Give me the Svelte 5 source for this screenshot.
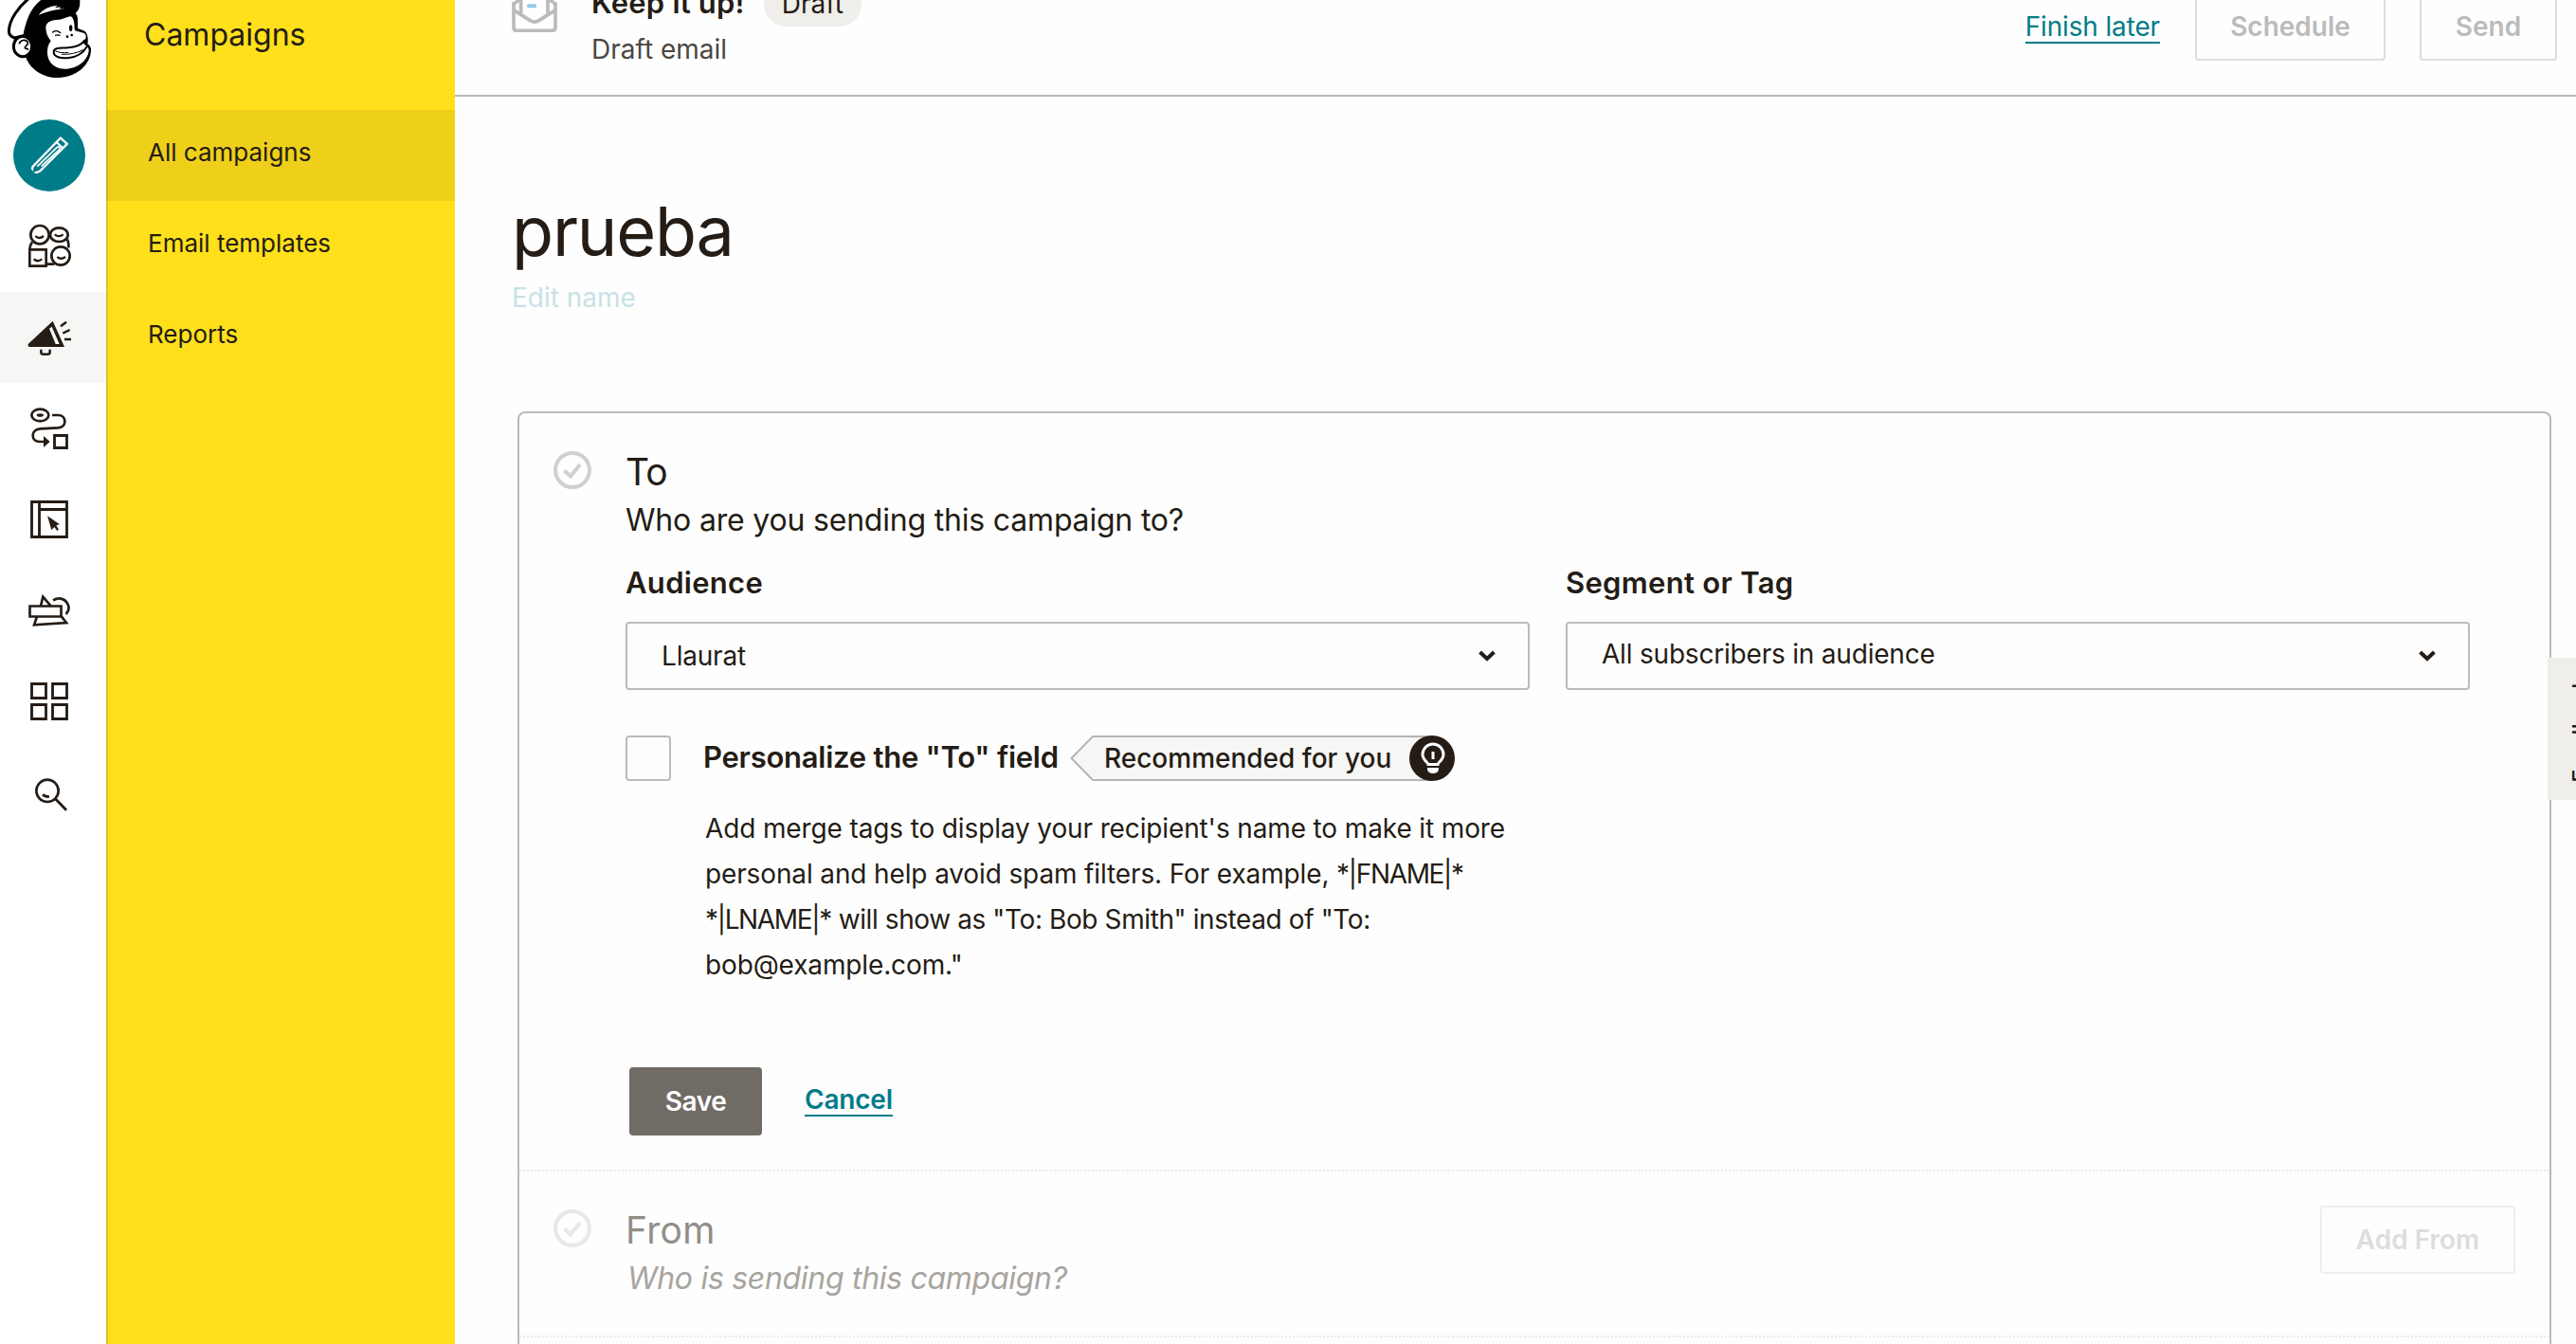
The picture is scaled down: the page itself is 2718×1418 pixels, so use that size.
<script lang="ts">
  type IconName =
    | "create"
    | "audience"
    | "campaigns"
    | "automations"
    | "website"
    | "studio"
    | "integrations"
    | "search";

  const rail: IconName[] = [
    "create",
    "audience",
    "campaigns",
    "automations",
    "website",
    "studio",
    "integrations",
    "search",
  ];

  const viewBoxes: Record<IconName, string> = {
    create: "84 420 144 144",
    audience: "84 708 144 144",
    campaigns: "84 996 144 144",
    automations: "84 24 144 144",
    website: "84 312 144 144",
    studio: "84 600 144 144",
    integrations: "84 888 144 144",
    search: "84 1176 144 144",
  };

  const links = ["All campaigns", "Email templates", "Reports"];

  let activeRail: IconName = $state("campaigns");
  let activeLink = $state("All campaigns");
  let personalize = $state(false);
</script>

{#snippet check()}
  <svg class="check" viewBox="0 0 40 40" fill="none" stroke="currentColor" stroke-width="4">
    <circle cx="20" cy="20" r="18" />
    <path d="M11.5 20.5l6.5 6L28 14" />
  </svg>
{/snippet}

{#snippet chevron()}
  <svg class="chevron" viewBox="0 0 18 12" fill="none" stroke="currentColor" stroke-width="4">
    <path d="M1.6 2L9 9l7.400-7" />
  </svg>
{/snippet}

<div class="page">
  <nav class="rail">
    <svg class="logo" viewBox="0 0 336 348">
      <path
        d="M95-8C60 20 29 62 28 98c0 12 8 18 18 22l32-8C86 62 115 20 160-8z"
        fill="#fff"
        stroke="#000"
        stroke-width="9"
      />
      <path
        d="M136-5C98 22 82 62 76 106l6 76c14 36 52 64 102 64 58 0 106-42 104-92-2-8-7-12-11-15 3-14 1-32-8-40-8-6-18-6-23-10V62c0-10-3-16-7-20 13-12 16-26 13-47z"
      />
      <path
        d="M145 88c0-16 14-24 33-25 22 0 32-10 46-11 9 4 12 20 12 41 2 9 26 6 34 15 5 11 0 19-8 24 3 11 21 15 19 29-4 30-35 57-76 57-39 0-57-28-55-58 1-14 5-22 11-30-10-12-16-26-16-42z"
        fill="#fff"
      />
      <g fill="none" stroke="#000" stroke-width="6" stroke-linecap="round">
        <path d="M268 128c-12 16-30 22-52 23-22 2-46-2-46 14 0 15 22 21 48 18 24-3 44-14 56-34" />
        <path d="M176 162c14 5 24 6 40 4M196 172c26 1 48-4 66-14" stroke-width="3" />
        <path d="M167 102c6-5 16-6 24 2M176 112c4-2 8-2 13 0" stroke-width="4" />
      </g>
      <ellipse cx="224" cy="89" rx="5" ry="10" />
      <circle cx="213" cy="116" r="4" />
      <circle cx="227" cy="111" r="4" />
      <ellipse cx="72" cy="147" rx="29" ry="32" fill="#fff" stroke="#000" stroke-width="9" />
      <path
        d="M61 139c2-13 22-16 27-4 3 8-10 10-9 16 2 5 10 1 10 7"
        fill="none"
        stroke="#000"
        stroke-width="5"
      />
      <path d="M122 48c14-20 34-28 60-31l-8 8 18-3-5 5 22-1c-32 5-60 8-87 22z" fill="#fff" />
    </svg>

    {#each rail as name}
      <button
        class="rail-item {name}"
        class:active={name === activeRail}
        aria-label={name}
        onclick={() => (activeRail = name)}
      >
        <svg viewBox={viewBoxes[name]} fill="none" stroke="currentColor" stroke-width="8.500">
          {#if name === "create"}
            <path d="M99.500 547.500l4-20 88-91 21 19-86 86-12 5z" stroke-width="7" />
            <path d="M178 449l20 19" stroke-width="6" />
            <path d="M118 527l62-60q5-4 8-1t-1 8l-56 52" stroke-width="5" />
          {:else if name === "audience"}
            <g stroke-width="8">
              <circle cx="126" cy="743" r="29" />
              <ellipse cx="187" cy="743" rx="28" ry="22" />
              <path d="M94 790h52v52H94z" />
              <circle cx="192" cy="810" r="29" />
              <path d="M102 766q-8 10-8 22M213 758q5 10 4 26M150 836h22" />
            </g>
            <path
              d="M112 747q12 12 26 0M173 742q13 11 27 0M107 820q12 11 26 0M181 813q12 11 26 0"
              stroke-width="7"
            />
          {:else if name === "campaigns"}
            <path
              d="M89 1089l78-73 37 82H92q-6-4-3-9zm67-49l20 49h12l-24-55z"
              fill="currentColor"
              fill-rule="evenodd"
              stroke="none"
            />
            <path
              d="M192 1033l18-14M199 1055l22-11M204 1074h21M130 1106v9q0 6 7 6h14q7 0 7-6v-9"
              stroke-width="7.500"
            />
          {:else if name === "automations"}
            <ellipse cx="127" cy="54" rx="27" ry="19" stroke-width="8" />
            <ellipse cx="127" cy="54" rx="11" ry="5.500" fill="currentColor" stroke="none" />
            <path
              d="M165 54h18c15 0 22 9 22 20s-8 19-21 20l-56 3c-14 1-24 9-24 21 0 13 9 20 21 20h15"
              stroke-width="8"
            />
            <path d="M138 120l20 18-20 18z" fill="currentColor" stroke="none" />
            <path d="M172.500 118.500h39v39h-39z" />
          {:else if name === "website"}
            <path d="M100.500 328.500h111v111h-111zM124.500 328v112M124 352.500h88" />
            <path
              d="M150 373l39 27-11 3 8 13-5 4-9-12-9 10z"
              fill="currentColor"
              stroke="none"
            />
          {:else if name === "studio"}
            <g stroke-width="8">
              <path d="M94.500 658.500h99v33h-99zM129 658l7-29 25 29M117 692l-9 26 102-7-15-19" />
              <path d="M168 640c16-10 36-7 45 9 7 12 6 24-4 35" />
            </g>
          {:else if name === "integrations"}
            <path
              d="M100.500 904.500h45v45h-45zM166.500 904.500h45v45h-45zM100.500 970.500h45v45h-45zM166.500 970.500h45v45h-45z"
            />
          {:else}
            <circle cx="150" cy="1243" r="35" stroke-width="8" />
            <path d="M176 1269l34 35" stroke-width="8.500" />
            <path d="M135 1255q8 8 21 6" />
          {/if}
        </svg>
      </button>
    {/each}
  </nav>

  <aside class="sidebar">
    <h2>Campaigns</h2>
    {#each links as link}
      <button class="side-link" class:active={link === activeLink} onclick={() => (activeLink = link)}>
        {link}
      </button>
    {/each}
  </aside>

  <main>
    <header>
      <svg class="envelope" viewBox="120 -43 144 144" fill="none" stroke="#bbb" stroke-width="11">
        <path d="M126 6v80q0 10 10 10h112q10 0 10-10V6" />
        <path d="M126 31l52 33q14 9 28 0l52-33M149-43v88M234-43v88M126 16q2-10 22-18M258 16q-2-10-22-18" />
        <rect x="168" y="12" width="30" height="12" rx="5" fill="#93c9e8" stroke="none" />
      </svg>
      <div class="status">
        <div class="status-row">
          <strong>Keep it up!</strong>
          <span class="pill">Draft</span>
        </div>
        <div class="kind">Draft email</div>
      </div>
      <div class="actions">
        <a class="link finish" href="#later">Finish later</a>
        <button class="btn schedule" disabled>Schedule</button>
        <button class="btn send" disabled>Send</button>
      </div>
    </header>

    <div class="title">
      <h1>prueba</h1>
      <a href="#rename">Edit name</a>
    </div>

    <div class="card">
      <section class="step">
        {@render check()}
        <div class="body">
          <h3 class="to">To</h3>
          <p class="lead">Who are you sending this campaign to?</p>
          <div class="fields">
            <div class="field">
              <span class="label">Audience</span>
              <div class="select"><span>Llaurat</span>{@render chevron()}</div>
            </div>
            <div class="field">
              <span class="label">Segment or Tag</span>
              <div class="select"><span class="all">All subscribers in audience</span>{@render chevron()}</div>
            </div>
          </div>
          <div class="personalize">
            <button
              class="box"
              role="checkbox"
              aria-checked={personalize}
              aria-label="Personalize"
              onclick={() => (personalize = !personalize)}
            ></button>
            <span class="label personalize-label">Personalize the "To" field</span>
            <div class="tag">
              <svg class="tag-tip" viewBox="0 0 24 48">
                <path d="M24 1L1.500 24 24 47" fill="#f6f6f4" stroke="#b5b5b3" stroke-width="2" />
              </svg>
              <div class="tag-body"><span>Recommended for you</span></div>
              <svg class="bulb" viewBox="0 0 48 48">
                <circle cx="24" cy="24" r="24" fill="#241c15" />
                <path
                  d="M20 30.500c0-2-6-4.500-6-10.500a11 11 0 0 1 22 0c0 6-6 8.500-6 10.500z"
                  fill="none"
                  stroke="#fff"
                  stroke-width="3"
                />
                <path d="M25 17v8" stroke="#fff" stroke-width="3" />
                <path d="M19 34h12v2q-1 4-6 4t-6-4z" fill="#fff" />
              </svg>
            </div>
          </div>
          <p class="help">
            Add merge tags to display your recipient's name to make it more<br />
            personal and help avoid spam filters. For example, <span class="merge">*|FNAME|*</span><br />
            <span class="merge">*|LNAME|*</span> <span class="tight">will show as "To: Bob Smith" instead of "To:</span><br />
            bob@example.com."
          </p>
          <div class="buttons">
            <button class="save">Save</button>
            <a class="link cancel" href="#cancel">Cancel</a>
          </div>
        </div>
      </section>

      <section class="step from">
        {@render check()}
        <div class="body">
          <h3>From</h3>
          <p class="lead">Who is sending this campaign?</p>
        </div>
        <button class="btn add" disabled>Add From</button>
      </section>
    </div>
  </main>

  <div class="feedback"><span>Feedback</span></div>
</div>

<style>
  :global(body) {
    margin: 0;
    background: #fff;
  }

  .page {
    position: relative;
    display: flex;
    width: 2718px;
    height: 1418px;
    overflow: hidden;
    background: #fefefe;
    color: #241c15;
    font-family: Inter, "Liberation Sans", sans-serif;
    font-size: 28px;
    white-space: nowrap;
  }

  h1,
  h2,
  h3,
  p {
    margin: 0;
    font-weight: 400;
  }

  button {
    margin: 0;
    padding: 0;
    border: 0;
    background: none;
    color: inherit;
    font: inherit;
  }

  svg {
    display: block;
    flex: none;
  }

  .rail {
    flex: none;
    display: flex;
    flex-direction: column;
    width: 112px;
    background: #fff;
  }

  .logo {
    width: 112px;
    height: 116px;
  }

  .rail-item {
    display: flex;
    align-items: center;
    justify-content: center;
    height: 96px;
    padding-right: 8px;
  }

  .rail-item svg {
    width: 48px;
    height: 48px;
  }

  .rail-item.active {
    background: #f6f6f4;
  }

  .rail-item.create svg {
    padding: 14px;
    border-radius: 50%;
    background: #007c89;
    color: #fff;
  }

  .sidebar {
    flex: none;
    box-sizing: border-box;
    width: 368px;
    background: #ffe01b;
    box-shadow: inset 2px 0 0 #dcc31f;
  }

  .sidebar h2 {
    height: 116px;
    padding-left: 40px;
    box-sizing: border-box;
    font-size: 32px;
    line-height: 74px;
  }

  .side-link {
    display: block;
    width: 100%;
    height: 96px;
    padding: 0 0 8px 44px;
    font-size: 26px;
    text-align: left;
  }

  .side-link.active {
    background: rgba(36, 28, 21, 0.08);
  }

  main {
    flex: 1;
    min-width: 0;
  }

  header {
    display: flex;
    align-items: flex-start;
    box-sizing: border-box;
    height: 162px;
    margin-top: -60px;
    padding: 40px 20px 0 60px;
    border-bottom: 2px solid #bbb;
  }

  .envelope {
    width: 48px;
    height: 48px;
    margin: 6px 36px 0 0;
  }

  .status-row {
    display: flex;
    align-items: flex-start;
    height: 48px;
  }

  .status-row strong {
    font-size: 31px;
    font-weight: 600;
    letter-spacing: 0.2px;
    line-height: 46px;
  }

  .pill {
    margin-left: 20px;
    padding: 0 19px;
    border-radius: 24px;
    background: #efeeea;
    line-height: 48px;
  }

  .kind {
    margin-top: 6px;
    color: #4c4640;
    line-height: 36px;
  }

  .actions {
    display: flex;
    align-items: center;
    margin: 12px 0 0 auto;
  }

  .btn {
    box-sizing: border-box;
    height: 72px;
    border: 2px solid #ddd;
    border-radius: 4px;
    color: #bbb;
    font-weight: 600;
    text-align: center;
  }

  .schedule {
    width: 201px;
    margin: 0 36px 0 37px;
  }

  .send {
    width: 145px;
  }

  .link {
    border-bottom: 2px solid #007c89;
    color: #007c89;
    line-height: 32px;
    text-decoration: none;
  }

  .finish {
    margin-top: 2px;
    letter-spacing: -0.15px;
  }

  .title {
    display: flex;
    flex-direction: column;
    align-items: flex-start;
    gap: 10px;
    padding: 102px 0 100px 60px;
  }

  .title h1 {
    font-size: 72px;
    letter-spacing: -1.2px;
    line-height: 80px;
  }

  .title a {
    color: #c8e2e5;
    line-height: 40px;
    text-decoration: none;
  }

  .card {
    box-sizing: border-box;
    width: 2146px;
    height: 1100px;
    margin-left: 66px;
    border: 2px solid #bbb;
    border-radius: 8px;
  }

  .step {
    display: flex;
    align-items: flex-start;
    padding: 38px 84px 36px 36px;
    border-bottom: 2px dotted #eaeaea;
  }

  .check {
    width: 40px;
    height: 40px;
    margin: 2px 36px 0 0;
    color: #d0d0ce;
  }

  .body {
    flex: 1;
  }

  h3 {
    font-size: 39px;
    line-height: 48px;
  }

  .to {
    letter-spacing: -1px;
  }

  .lead {
    margin-top: 3px;
    font-size: 32px;
    letter-spacing: -0.19px;
    line-height: 48px;
  }

  .fields {
    display: flex;
    gap: 38px;
    margin-top: 22px;
  }

  .field {
    flex: 1;
  }

  .label {
    font-size: 31px;
    font-weight: 600;
    letter-spacing: 0.3px;
    line-height: 40px;
  }

  .field .label {
    display: inline-block;
  }

  .select {
    display: flex;
    align-items: center;
    justify-content: space-between;
    box-sizing: border-box;
    height: 72px;
    margin-top: 21px;
    padding: 0 34px 0 36px;
    border: 2px solid #bbb;
    border-radius: 4px;
    letter-spacing: -0.2px;
  }

  .chevron {
    width: 18px;
    height: 12px;
  }

  .all {
    margin-top: -4px;
  }

  .personalize {
    display: flex;
    align-items: center;
    height: 48px;
    margin-top: 48px;
  }

  .box {
    box-sizing: border-box;
    width: 48px;
    height: 48px;
    margin-right: 34px;
    border: 2px solid #bbb;
    border-radius: 4px;
  }

  .personalize-label {
    width: 387px;
    margin-top: -2px;
    letter-spacing: -0.25px;
  }

  .tag {
    display: flex;
    height: 48px;
  }

  .tag-tip {
    width: 24px;
    height: 48px;
  }

  .tag-body {
    box-sizing: border-box;
    width: 358px;
    margin-right: -24px;
    padding-left: 12px;
    border: solid #b5b5b3;
    border-width: 2px 0;
    background: #f6f6f4;
    font-weight: 500;
    line-height: 44px;
  }

  .bulb {
    width: 48px;
    height: 48px;
  }

  .help {
    margin: 26px 0 0 84px;
    letter-spacing: -0.13px;
    line-height: 48px;
  }

  .merge {
    letter-spacing: -1.35px;
  }

  .tight {
    letter-spacing: -0.4px;
  }

  .buttons {
    display: flex;
    align-items: flex-start;
    margin: 84px 0 0 4px;
  }

  .save {
    width: 140px;
    height: 72px;
    border-radius: 4px;
    background: #706b65;
    color: #fff;
    font-weight: 600;
    letter-spacing: -0.4px;
  }

  .cancel {
    margin: 18px 0 0 45px;
    font-weight: 600;
    letter-spacing: -0.2px;
  }

  .from {
    padding: 38px 36px 36px 36px;
  }

  .from .check {
    margin-top: 2px;
    color: #e8e8e7;
  }

  .from h3 {
    color: #928d88;
    letter-spacing: 0.3px;
  }

  .from .lead {
    padding-left: 2px;
    color: #a8a49f;
    font-style: italic;
    letter-spacing: -0.3px;
  }

  .add {
    width: 206px;
    margin-top: -2px;
    border-color: #eee;
    color: #ddd;
  }

  .feedback {
    position: absolute;
    top: 694px;
    left: 2688px;
    display: flex;
    align-items: center;
    justify-content: center;
    width: 70px;
    height: 150px;
    background: #efeeea;
    font-size: 24px;
    font-weight: 500;
  }

  .feedback span {
    transform: rotate(-90deg);
  }
</style>
